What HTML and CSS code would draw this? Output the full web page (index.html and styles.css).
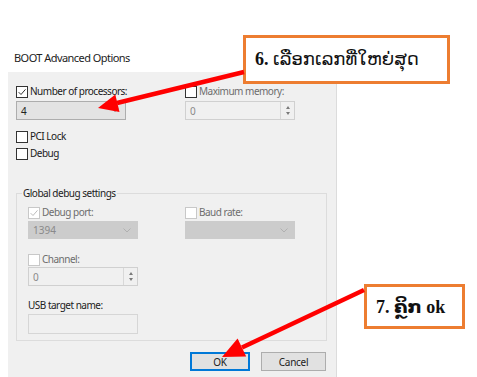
FILE: index.html
```html
<!DOCTYPE html>
<html lang="lo">
<head>
    <meta charset="UTF-8">
    <title>BOOT Advanced Options</title>
    <link rel="stylesheet" href="styles.css">
</head>
<body>
<div class="screen">
    <div class="title">BOOT Advanced Options</div>

    <div class="dialog">
        <div class="pair">
            <div class="field">
                <div class="check">
                    <span class="box"><svg viewBox="0 0 12 12"><path d="M2 6.2 L4.8 9 L10.2 2.8"/></svg></span>
                    <span>Number of processors:</span>
                </div>
                <div class="combo active">
                    <span>4</span>
                    <svg class="chev" viewBox="0 0 8 5"><path d="M0.5 0.5 L4 4 L7.5 0.5"/></svg>
                </div>
            </div>
            <div class="field">
                <div class="check">
                    <span class="box"></span>
                    <span class="dim">Maximum memory:</span>
                </div>
                <div class="spin">
                    <span>0</span>
                    <span class="spin-btns"><i class="up"></i><i class="down"></i></span>
                </div>
            </div>
        </div>

        <div class="check solo first">
            <span class="box"></span>
            <span>PCI Lock</span>
        </div>
        <div class="check solo">
            <span class="box"></span>
            <span>Debug</span>
        </div>

        <fieldset class="group">
            <legend>Global debug settings</legend>
            <div class="pair">
                <div class="field">
                    <div class="check off">
                        <span class="box"><svg viewBox="0 0 12 12"><path d="M2 6.2 L4.8 9 L10.2 2.8"/></svg></span>
                        <span class="dim">Debug port:</span>
                    </div>
                    <div class="combo">
                        <span>1394</span>
                        <svg class="chev" viewBox="0 0 8 5"><path d="M0.5 0.5 L4 4 L7.5 0.5"/></svg>
                    </div>
                </div>
                <div class="field">
                    <div class="check off">
                        <span class="box"></span>
                        <span class="dim">Baud rate:</span>
                    </div>
                    <div class="combo">
                        <span></span>
                        <svg class="chev" viewBox="0 0 8 5"><path d="M0.5 0.5 L4 4 L7.5 0.5"/></svg>
                    </div>
                </div>
            </div>

            <div class="field channel">
                <div class="check off">
                    <span class="box"></span>
                    <span class="dim">Channel:</span>
                </div>
                <div class="spin">
                    <span>0</span>
                    <span class="spin-btns"><i class="up"></i><i class="down"></i></span>
                </div>
            </div>

            <div class="field usb">
                <div class="label">USB target name:</div>
                <div class="textbox"></div>
            </div>
        </fieldset>

        <div class="buttons">
            <button class="btn default">OK</button>
            <button class="btn">Cancel</button>
        </div>
    </div>

    <div class="note note-six"><b>6.</b> ເລືອກເລກທີ່ໃຫຍ່ສຸດ</div>
    <div class="note note-seven"><b>7.</b> ຄຼິກ <b>ok</b></div>

    <svg class="arrows" viewBox="0 0 477 377" width="477" height="377">
        <line x1="244" y1="72" x2="117" y2="103" />
        <polygon points="98,108 119.5,112 115.3,94.5" />
        <line x1="364" y1="290" x2="242" y2="347.5" />
        <polygon points="222,357 246.2,356.6 237.6,338.6" />
    </svg>
</div>
</body>
</html>
```

FILE: styles.css
```css
html, body {
    margin: 0;
    background: #fff;
}
body {
    font-family: "Noto Sans", "DejaVu Sans", sans-serif;
    font-size: 10px;
    color: #1a1a1a;
}
.screen {
    position: relative;
    width: 477px;
    height: 377px;
    overflow: hidden;
}
.title {
    margin: 51px 0 0 14px;
    font-size: 11px;
    line-height: 14px;
    letter-spacing: -0.55px;
    color: #222;
}
.dialog {
    box-sizing: border-box;
    margin: 7px 0 0 8px;
    width: 329px;
    height: 305px;
    padding: 13px 0 0 8px;
    background: #f0f0f0;
    border-right: 1px solid #dcdcdc;
}
.pair {
    display: grid;
    grid-template-columns: 110px 110px;
    column-gap: 59px;
}
.field {
    display: flex;
    flex-direction: column;
}
.check {
    display: flex;
    align-items: center;
    height: 13px;
    line-height: 13px;
    letter-spacing: -0.5px;
    white-space: nowrap;
}
.box {
    box-sizing: border-box;
    width: 12px;
    height: 12px;
    margin-right: 2px;
    border: 1px solid #333;
    background: #fff;
    display: flex;
    flex: none;
}
.box svg {
    width: 10px;
    height: 10px;
    fill: none;
    stroke: #333;
    stroke-width: 1.2;
}
.off .box {
    border-color: #c8c8c8;
}
.off .box svg {
    stroke: #bcbcbc;
}
.dim {
    color: #6d6d6d;
}
.combo, .spin {
    box-sizing: border-box;
    display: flex;
    align-items: center;
    justify-content: space-between;
    height: 19px;
    margin-top: 3px;
    padding-left: 4px;
    color: #8a8a8a;
    background: #cccccc;
    border: 1px solid #cccccc;
}
.combo.active {
    color: #222;
    background: #e3e3e3;
    border-color: #adadad;
}
.chev {
    width: 8px;
    height: 5px;
    margin-right: 6px;
    fill: none;
    stroke: #b0b0b0;
    stroke-width: 1;
}
.spin {
    background: #f0f0f0;
    border-color: #d0d0d0;
    padding-right: 0;
}
.spin-btns {
    box-sizing: border-box;
    width: 14px;
    height: 100%;
    border-left: 1px solid #d8d8d8;
    display: flex;
    flex-direction: column;
    align-items: center;
    justify-content: center;
    gap: 3px;
}
.spin-btns i {
    width: 0;
    height: 0;
    border-left: 2.5px solid transparent;
    border-right: 2.5px solid transparent;
}
.spin-btns .up {
    border-bottom: 3px solid #7a7a7a;
}
.spin-btns .down {
    border-top: 3px solid #7a7a7a;
}
.solo.first {
    margin-top: 10px;
}
.solo + .solo {
    margin-top: 4px;
}
.group {
    box-sizing: border-box;
    width: 311px;
    margin: 27px 0 0;
    padding: 7px 11px 6px;
    border: 1px solid #dcdcdc;
}
.group legend {
    margin-left: -6px;
    padding: 0 1px;
    font-size: 10px;
    line-height: 12px;
    letter-spacing: -0.5px;
    color: #222;
}
.group .pair {
    column-gap: 47px;
}
.group .combo {
    margin-top: 2px;
    height: 18px;
}
.channel {
    width: 110px;
    margin-top: 14px;
}
.channel .spin {
    margin-top: 1px;
    height: 19px;
}
.usb {
    width: 110px;
    margin-top: 13px;
}
.label {
    line-height: 13px;
    letter-spacing: -0.5px;
    color: #222;
}
.textbox {
    box-sizing: border-box;
    height: 20px;
    margin-top: 2px;
    background: #f0f0f0;
    border: 1px solid #d6d6d6;
}
.buttons {
    display: flex;
    justify-content: flex-end;
    gap: 11px;
    margin: 11px 10px 0 0;
}
.btn {
    box-sizing: border-box;
    height: 19px;
    padding: 0;
    font-family: inherit;
    font-size: 10px;
    letter-spacing: -0.3px;
    color: #222;
    background: #e1e1e1;
    border: 1px solid #adadad;
}
.btn.default {
    width: 60px;
    border: 2px solid #0078d7;
}
.btn + .btn {
    width: 65px;
}
.note {
    position: absolute;
    box-sizing: border-box;
    background: #fff;
    border: 3px solid #ed7d31;
    font-family: "Liberation Serif", "DejaVu Sans", serif;
    color: #111;
    white-space: nowrap;
}
.note b {
    font-weight: bold;
}
.note-six {
    left: 243px;
    top: 35px;
    width: 207px;
    height: 49px;
    padding: 9px 0 0 9px;
    font-size: 18px;
    line-height: 24px;
}
.note-seven {
    left: 364px;
    top: 284px;
    width: 101px;
    height: 45px;
    padding: 8px 0 0 9px;
    font-size: 18px;
    font-weight: bold;
    line-height: 24px;
}
.arrows {
    position: absolute;
    left: 0;
    top: 0;
    pointer-events: none;
}
.arrows line {
    stroke: #ff0000;
    stroke-width: 4.5;
}
.arrows polygon {
    fill: #ff0000;
}
```
